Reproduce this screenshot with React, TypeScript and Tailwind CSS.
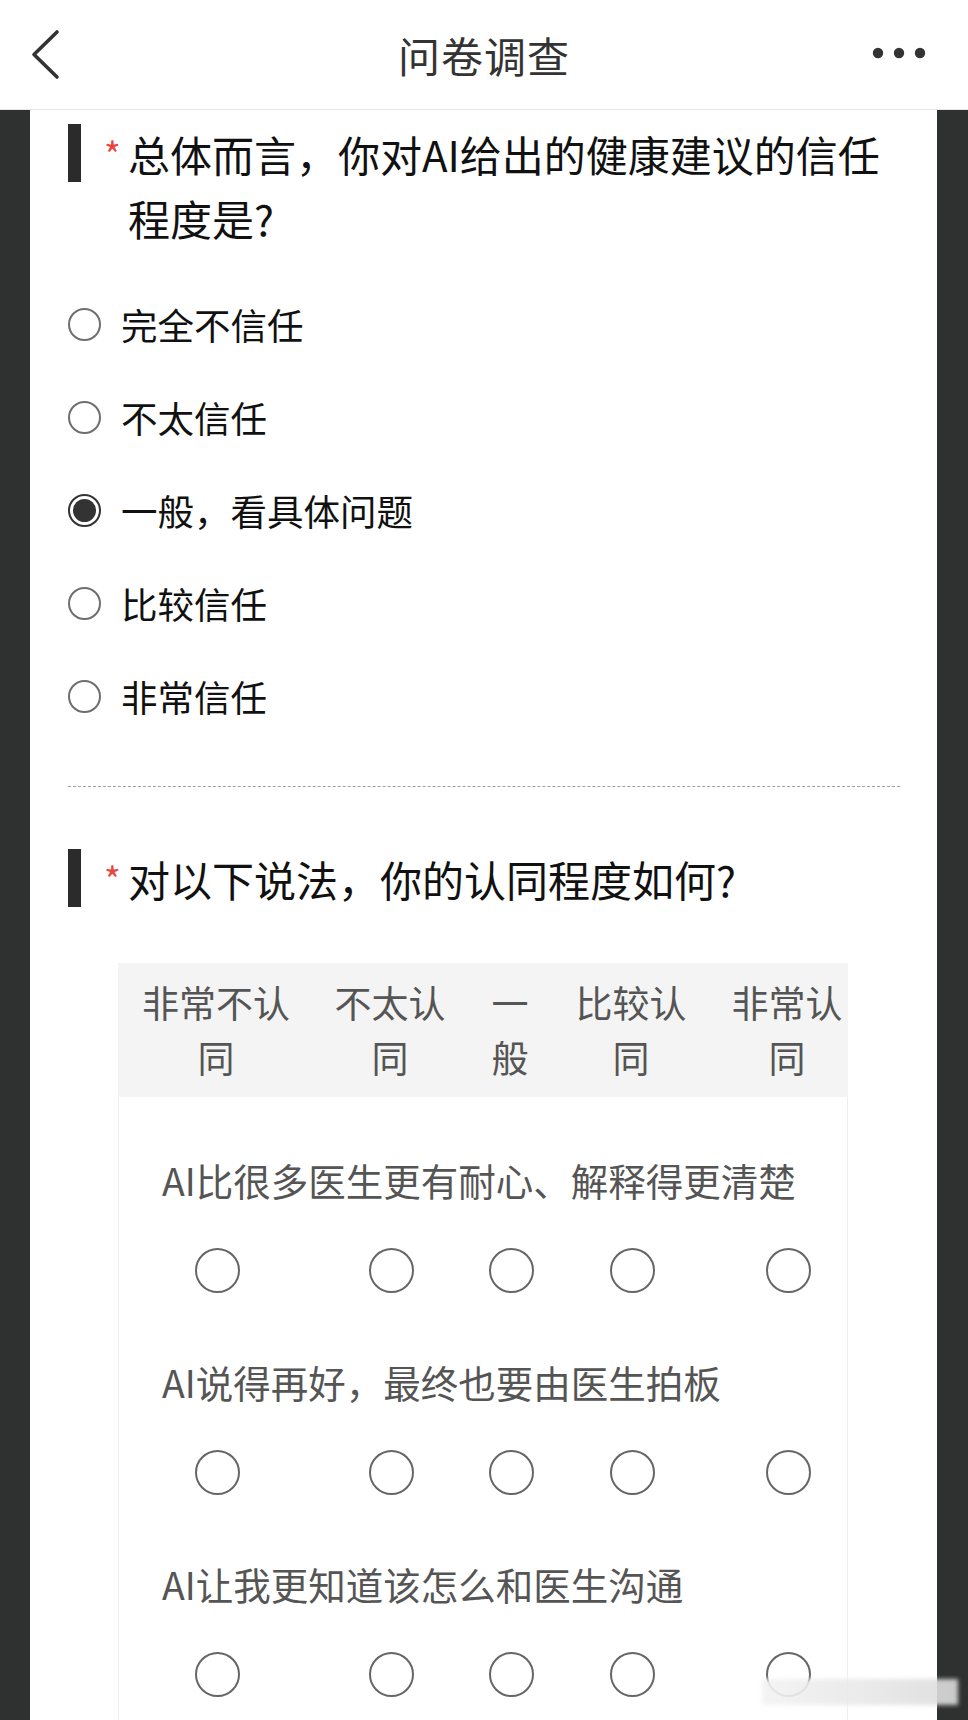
import React from "react";

const font = { fontFamily: '"Noto Sans CJK SC", "Noto Sans", sans-serif' };

const options = ["完全不信任", "不太信任", "一般，看具体问题", "比较信任", "非常信任"];
const statements = [
  "AI比很多医生更有耐心、解释得更清楚",
  "AI说得再好，最终也要由医生拍板",
  "AI让我更知道该怎么和医生沟通",
];
const headers: React.ReactNode[] = [
  <>非常不认<br />同</>,
  <>不太认<br />同</>,
  <>一<br />般</>,
  <>比较认<br />同</>,
  <>非常认<br />同</>,
];

function QTitle({ children }: { children: React.ReactNode }) {
  return (
    <div className="flex items-start">
      <div className="w-[13px] h-[58px] bg-[#2b2b2b] shrink-0" />
      <span className="ml-[23px] w-[24px] text-[36px] leading-[40px] mt-[9px] text-[#e8453c] shrink-0">*</span>
      <div className="text-[42px] leading-[64px] text-[#111] whitespace-nowrap -mt-[2px]">{children}</div>
    </div>
  );
}

export default function App() {
  return (
    <div className="w-[968px] h-[1720px] overflow-hidden bg-[#2f3030] relative" style={font}>
      {/* header */}
      <div className="h-[110px] bg-white border-b border-[#e6e6e6] flex items-center justify-between relative">
        <svg width="90" height="110" viewBox="0 0 90 110" className="shrink-0">
          <polyline points="57,32 34,54.5 57,77" fill="none" stroke="#333" strokeWidth="3.6" strokeLinecap="round" strokeLinejoin="round" />
        </svg>
        <div className="absolute left-0 right-0 top-0 h-[108px] flex items-center justify-center pointer-events-none">
          <span className="text-[42px] text-[#333] tracking-[1px]">问卷调查</span>
        </div>
        <svg width="100" height="110" viewBox="0 0 100 110" className="shrink-0">
          <circle cx="10" cy="53" r="5.2" fill="#333" />
          <circle cx="31" cy="53" r="5.2" fill="#333" />
          <circle cx="52" cy="53" r="5.2" fill="#333" />
        </svg>
      </div>

      {/* panel */}
      <div className="ml-[30px] w-[907px] bg-white h-[1610px] pt-[14px]">
        <div className="pl-[38px]">
          <QTitle>
            总体而言，你对AI给出的健康建议的信任
            <br />
            程度是?
          </QTitle>

          <div className="mt-[28px]">
            {options.map((o, i) => (
              <div key={o} className="h-[93px] flex items-center">
                {i === 2 ? (
                  <div className="w-[33px] h-[33px] rounded-full border-2 border-[#333] flex items-center justify-center">
                    <div className="w-[23px] h-[23px] rounded-full bg-[#333]" />
                  </div>
                ) : (
                  <div className="w-[33px] h-[33px] rounded-full border-2 border-[#6e6e6e]" />
                )}
                <span className="ml-[20px] text-[36.5px] text-[#111] leading-[50px]">{o}</span>
              </div>
            ))}
          </div>
        </div>

        <div className="mt-[43px] ml-[38px] w-[832px] border-t border-dashed border-[#a0a0a0]" />

        <div className="pl-[38px] mt-[62px]">
          <QTitle>对以下说法，你的认同程度如何?</QTitle>
        </div>

        {/* matrix table */}
        <div className="mt-[52px] ml-[88px] w-[730px] overflow-hidden">
          <div className="h-[134px] bg-[#f4f4f4] grid grid-cols-[196px_152px_88px_154px_158px] items-center">
            {headers.map((h, i) => (
              <div key={i} className="text-center text-[37px] leading-[55px] text-[#555] whitespace-nowrap">
                {h}
              </div>
            ))}
          </div>
          <div className="border-x border-[#eeeeee] pt-[58px] pb-[40px]">
            {statements.map((s) => (
              <div key={s} className="mb-[64px]">
                <div className="pl-[43px] text-[37.5px] leading-[50px] text-[#555] whitespace-nowrap">{s}</div>
                <div className="mt-[43px] grid grid-cols-[196px_152px_88px_154px_158px]">
                  {[0, 1, 2, 3, 4].map((c) => (
                    <div key={c} className="flex justify-center">
                      <div className="w-[45px] h-[45px] rounded-full border-2 border-[#666]" />
                    </div>
                  ))}
                </div>
              </div>
            ))}
          </div>
        </div>
      </div>

      {/* watermark blur */}
      <div className="absolute left-[762px] top-[1679px] w-[196px] h-[26px] bg-gradient-to-r from-[#f3f3f3] via-[#e9e9e9] to-[#dcdcdc] opacity-90 blur-[2px]" />
    </div>
  );
}
